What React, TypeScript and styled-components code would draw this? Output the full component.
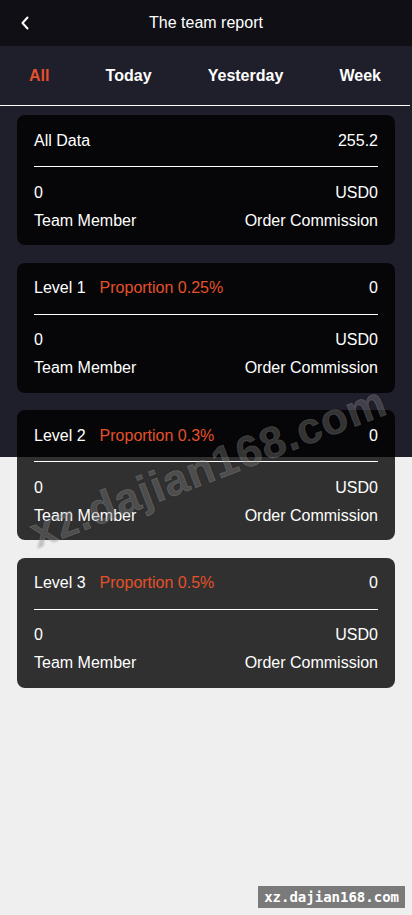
import React from "react";
import styled, { createGlobalStyle } from "styled-components";

const GlobalStyle = createGlobalStyle`
  html, body {
    margin: 0;
    padding: 0;
  }
  body {
    font-family: "Liberation Sans", Arial, sans-serif;
    background: #efefef;
    -webkit-font-smoothing: antialiased;
  }
  * { box-sizing: border-box; }
`;

const Page = styled.div`
  position: relative;
  min-height: 915px;
  background: linear-gradient(to bottom, #1f1e2b 0, #1f1e2b 457px, #efefef 457px);
  overflow: hidden;
`;

const Header = styled.header`
  height: 46px;
  display: grid;
  grid-template-columns: 46px 1fr 46px;
  align-items: center;
  background: rgba(0, 0, 0, 0.5);
  color: #fff;
`;

const BackButton = styled.button`
  width: 46px;
  height: 46px;
  border: 0;
  padding: 0 0 0 3px;
  background: transparent;
  display: flex;
  align-items: center;
  justify-content: center;
  cursor: pointer;
`;

const Title = styled.h1`
  margin: 0;
  text-align: center;
  font-size: 16px;
  font-weight: 400;
  line-height: 22px;
`;

const Tabs = styled.nav`
  height: 60px;
  display: flex;
  align-items: center;
  justify-content: space-between;
  padding: 1px 29px 0 29px;
  border-bottom: 1px solid #ffffff;
  margin-right: 2px;
`;

const Tab = styled.span<{ $active?: boolean }>`
  font-size: 16px;
  font-weight: 700;
  line-height: 22px;
  color: ${(p) => (p.$active ? "#e4512a" : "#ffffff")};
`;

const List = styled.main`
  display: flex;
  flex-direction: column;
  gap: 17.5px;
  padding: 9px 17px 20px;
`;

const Card = styled.section`
  height: 130px;
  border-radius: 8px;
  background: rgba(0, 0, 0, 0.8);
  padding: 14px 17px;
  color: #fff;
  font-size: 16px;
`;

const Row = styled.div<{ $mt?: number }>`
  display: flex;
  align-items: center;
  justify-content: space-between;
  line-height: 22px;
  height: 22px;
  padding-top: 1px;
  margin-top: ${(p) => p.$mt ?? 0}px;
  white-space: nowrap;
`;

const LeftGroup = styled.div`
  display: flex;
  align-items: center;
  gap: 14px;
`;

const Proportion = styled.span`
  color: #e4512a;
`;

const Divider = styled.div`
  height: 1px;
  background: #ffffff;
  margin-top: 15px;
`;

const Watermark = styled.div`
  position: absolute;
  left: 208px;
  top: 467px;
  transform: translate(-50%, -50%) rotate(-21deg);
  font-family: "Liberation Sans", Arial, sans-serif;
  font-weight: 700;
  font-size: 44px;
  letter-spacing: 1px;
  white-space: nowrap;
  color: rgba(255, 255, 255, 0.2);
  -webkit-text-stroke: 1px rgba(255, 255, 255, 0.12);
  text-shadow: 0 0 2px rgba(0, 0, 0, 0.25);
  pointer-events: none;
`;

const Badge = styled.div`
  position: absolute;
  right: 7px;
  top: 886px;
  height: 22px;
  padding: 0 6px;
  display: flex;
  align-items: center;
  background: #7a7a7a;
  color: #ffffff;
  font-family: "DejaVu Sans Mono", "Liberation Mono", monospace;
  font-weight: 700;
  font-size: 14px;
  pointer-events: none;
`;

type Item = {
  title: string;
  proportion?: string;
  value: string;
};

const items: Item[] = [
  { title: "All Data", value: "255.2" },
  { title: "Level 1", proportion: "Proportion 0.25%", value: "0" },
  { title: "Level 2", proportion: "Proportion 0.3%", value: "0" },
  { title: "Level 3", proportion: "Proportion 0.5%", value: "0" },
];

const tabs = ["All", "Today", "Yesterday", "Week"];

export default function App() {
  return (
    <>
      <GlobalStyle />
      <Page>
        <Header>
          <BackButton aria-label="Back">
            <svg width="10" height="14" viewBox="0 0 10 14" fill="none">
              <path
                d="M7.5 1.5 L2.5 7 L7.5 12.5"
                stroke="#ffffff"
                strokeWidth="2"
                strokeLinecap="round"
                strokeLinejoin="round"
              />
            </svg>
          </BackButton>
          <Title>The team report</Title>
          <span />
        </Header>
        <Tabs>
          {tabs.map((t, i) => (
            <Tab key={t} $active={i === 0}>
              {t}
            </Tab>
          ))}
        </Tabs>
        <List>
          {items.map((it) => (
            <Card key={it.title}>
              <Row>
                <LeftGroup>
                  <span>{it.title}</span>
                  {it.proportion && <Proportion>{it.proportion}</Proportion>}
                </LeftGroup>
                <span>{it.value}</span>
              </Row>
              <Divider />
              <Row $mt={14}>
                <span>0</span>
                <span>USD0</span>
              </Row>
              <Row $mt={6}>
                <span>Team Member</span>
                <span>Order Commission</span>
              </Row>
            </Card>
          ))}
        </List>
        <Watermark>xz.dajian168.com</Watermark>
        <Badge>xz.dajian168.com</Badge>
      </Page>
    </>
  );
}
